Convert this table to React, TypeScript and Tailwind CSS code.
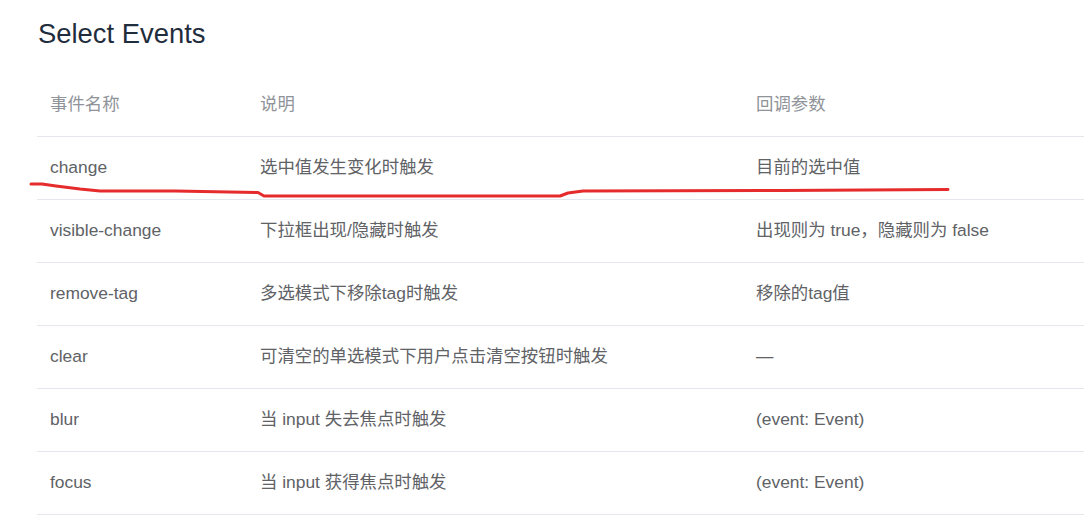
const rows = [
  { name: "change", desc: "选中值发生变化时触发", params: "目前的选中值" },
  { name: "visible-change", desc: "下拉框出现/隐藏时触发", params: "出现则为 true，隐藏则为 false" },
  { name: "remove-tag", desc: "多选模式下移除tag时触发", params: "移除的tag值" },
  { name: "clear", desc: "可清空的单选模式下用户点击清空按钮时触发", params: "—" },
  { name: "blur", desc: "当 input 失去焦点时触发", params: "(event: Event)" },
  { name: "focus", desc: "当 input 获得焦点时触发", params: "(event: Event)" },
];

export default function App() {
  return (
    <div
      className="relative w-[1084px] h-[531px] overflow-hidden bg-white"
      style={{ fontFamily: '"Liberation Sans", Arial, "Noto Sans CJK SC", sans-serif' }}
    >
      <div className="pl-[37px]">
        <h2 className="mt-[17px] text-[27.4px] leading-[33px] text-[#1f2d3d] pl-[1px]">Select Events</h2>

        <table className="mt-[23px] w-[1100px] border-collapse table-fixed text-[17.4px]">
          <colgroup>
            <col className="w-[210px]" />
            <col className="w-[496px]" />
            <col />
          </colgroup>
          <thead>
            <tr className="h-[63px] border-b border-[#e4e7ed] text-left text-[#909399]">
              <th className="font-normal pl-[13px]">事件名称</th>
              <th className="font-normal pl-[13px]">说明</th>
              <th className="font-normal pl-[13px]">回调参数</th>
            </tr>
          </thead>
          <tbody className="text-[#606266]">
            {rows.map((r) => (
              <tr key={r.name} className="h-[63px] border-b border-[#e4e7ed]">
                <td className="pl-[13px]">{r.name}</td>
                <td className="pl-[13px]">{r.desc}</td>
                <td className="pl-[13px]">{r.params}</td>
              </tr>
            ))}
          </tbody>
        </table>
      </div>

      {/* hand-drawn red underline */}
      <svg className="absolute left-0 top-0 pointer-events-none" width="1084" height="531">
        <path
          d="M31 184 L42 184 L56 186 L80 189 L100 191 L175 191 L258 192.5 L264 196 L560 196 L568 193 L583 191 L783 190.5 L948 189.5"
          fill="none"
          stroke="#e52b2b"
          strokeWidth="3"
          strokeLinecap="round"
          strokeLinejoin="round"
        />
      </svg>
    </div>
  );
}
